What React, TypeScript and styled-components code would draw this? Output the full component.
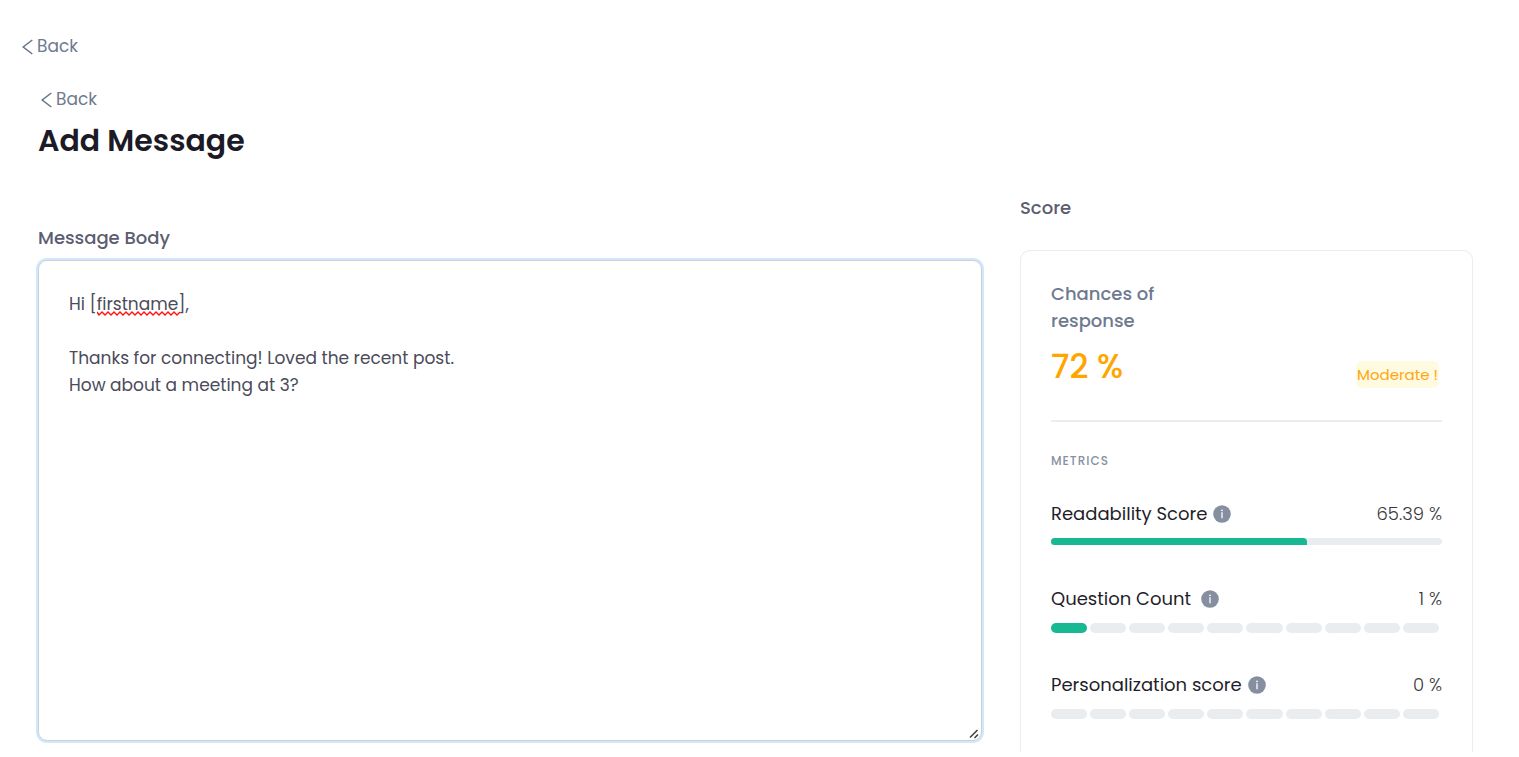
import React, { useState } from 'react';
import styled, { createGlobalStyle } from 'styled-components';

const GlobalStyle = createGlobalStyle`
  *, *::before, *::after { box-sizing: border-box; }
  body {
    margin: 0;
    background: #fff;
    color: #4b4b5a;
    font-family: Poppins, Inter, "Liberation Sans", sans-serif;
    font-size: 18px;
    line-height: 27px;
  }
`;

const Page = styled.div`
  padding: 33px 46px 0 22px;
`;

const BackLink = styled.a`
  display: flex;
  align-items: center;
  gap: 4px;
  width: fit-content;
  color: #6e7a8f;
  font-size: 17px;
  text-decoration: none;
`;

const Content = styled.main`
  padding: 26px 0 0 16px;
`;

const NestedBack = styled(BackLink)`
  margin-left: 3px;
`;

const Title = styled.h1`
  margin: 8px 0 0;
  color: #1b1a26;
  font-size: 30px;
  font-weight: 600;
  line-height: 40px;
`;

const Columns = styled.div`
  display: grid;
  grid-template-columns: minmax(0, 944fr) minmax(0, 453fr);
  column-gap: 38px;
  margin-top: 33px;
`;

const Editor = styled.section`
  padding-top: 30px;
`;

const FieldLabel = styled.label`
  display: block;
  color: #5c5d70;
  font-weight: 500;
`;

const FieldBox = styled.div`
  position: relative;
  margin-top: 9px;
`;

const MessageField = styled.textarea`
  display: block;
  width: 100%;
  height: 481px;
  padding: 30px;
  border: 1px solid #ced0d6;
  border-radius: 9px;
  outline: none;
  box-shadow: 0 0 0 2px #d0e8fd;
  background: #fff;
  color: #4b4b5a;
  font: inherit;
  font-size: 17px;
  resize: vertical;

  &::-webkit-resizer {
    background: transparent;
  }
`;

const SpellMark = styled.svg`
  position: absolute;
  top: 51px;
  left: 59px;
  pointer-events: none;
`;

const Grip = styled.svg`
  position: absolute;
  right: 3px;
  bottom: 2px;
  pointer-events: none;
`;

const SectionTitle = styled.h2`
  margin: 0;
  color: #5c5d70;
  font-size: 18px;
  font-weight: 500;
  line-height: 27px;
`;

const Card = styled.div`
  margin-top: 29px;
  padding: 29px 30px 33px;
  border: 1px solid #ececf1;
  border-bottom: 0;
  border-radius: 10px 10px 0 0;
`;

const Summary = styled.div`
  display: flex;
  align-items: flex-end;
  justify-content: space-between;
  padding-bottom: 32px;
  border-bottom: 2px solid #ececf1;
`;

const ChanceLabel = styled.div`
  width: 130px;
  color: #6e7a8f;
  font-weight: 500;
`;

const ChanceValue = styled.div`
  margin-top: 12px;
  color: #ffa500;
  font-size: 33px;
  font-weight: 500;
  line-height: 42px;
`;

const Badge = styled.span`
  margin-right: 3px;
  padding: 0 1px;
  border-radius: 6px;
  background: #fffbe0;
  color: #ffa510;
  font-size: 15px;
  font-weight: 400;
`;

const MetricsTitle = styled.h3`
  margin: 29px 0 0;
  color: #8791a3;
  font-size: 12px;
  font-weight: 500;
  line-height: 20px;
  letter-spacing: 1px;
`;

const Metric = styled.div<{ $gap: number }>`
  display: grid;
  row-gap: 11px;
  margin-top: ${(p) => p.$gap}px;
`;

const MetricHead = styled.div`
  display: flex;
  align-items: center;
  justify-content: space-between;
  height: 27px;
`;

const MetricName = styled.span<{ $wide?: boolean }>`
  display: flex;
  align-items: center;
  gap: ${(p) => (p.$wide ? 10 : 6)}px;
  color: #1f1e2a;
`;

const MetricValue = styled.span`
  color: #38383c;
  font-weight: 300;
`;

const Track = styled.div`
  height: 7px;
  overflow: hidden;
  border-radius: 4px;
  background: #e9edf0;
`;

const Fill = styled.div`
  height: 100%;
  border-radius: 0 4px 0 0;
  background: #18b893;
`;

const Segments = styled.div`
  display: flex;
  gap: 3px;
  padding-right: 3px;
`;

const Segment = styled.span<{ $on: boolean }>`
  flex: 1;
  height: 10px;
  border-radius: 5px;
  background: ${(p) => (p.$on ? '#18b893' : '#e9edf0')};
`;

const Chevron = () => (
  <svg width="11" height="16" viewBox="0 0 11 16" fill="none" aria-hidden="true">
    <path d="M10.3 1 1.2 8 10.3 15" stroke="#66728a" strokeWidth="1.5" />
  </svg>
);

const InfoIcon = () => (
  <svg width="18" height="18" viewBox="0 0 18 18" aria-hidden="true">
    <circle cx="9" cy="9" r="8.8" fill="#858fa0" />
    <circle cx="9" cy="5.3" r="0.9" fill="#fff" />
    <path d="M9 7.3V13.2" stroke="#fff" strokeWidth="1.3" />
  </svg>
);

const Squiggle = () => (
  <SpellMark width="85" height="5" viewBox="0 0 85 5" fill="none" aria-hidden="true">
    <path
      d={'M0 1' + Array.from({ length: 28 }, (_, i) => ` L${i * 3 + 2} ${i % 2 ? 1 : 4}`).join('')}
      stroke="#f11"
      strokeWidth="1.4"
    />
  </SpellMark>
);

const ResizeGrip = () => (
  <Grip width="10" height="10" viewBox="0 0 10 10" fill="none" aria-hidden="true">
    <path d="M1 8.5 8.5 1M5.5 9 9 5.5" stroke="#444" strokeWidth="1.6" />
  </Grip>
);

const SegmentBar = ({ filled }: { filled: number }) => (
  <Segments>
    {Array.from({ length: 10 }, (_, i) => (
      <Segment key={i} $on={i < filled} />
    ))}
  </Segments>
);

const DRAFT = `Hi [firstname],

Thanks for connecting! Loved the recent post.
How about a meeting at 3?`;

export default function App() {
  const [message, setMessage] = useState(DRAFT);
  const readability = 65.39;

  return (
    <>
      <GlobalStyle />
      <Page>
        <BackLink href="#">
          <Chevron />
          Back
        </BackLink>
        <Content>
          <NestedBack href="#">
            <Chevron />
            Back
          </NestedBack>
          <Title>Add Message</Title>
          <Columns>
            <Editor>
              <FieldLabel htmlFor="message">Message Body</FieldLabel>
              <FieldBox>
                <MessageField
                  id="message"
                  spellCheck={false}
                  value={message}
                  onChange={(e) => setMessage(e.target.value)}
                />
                {message.startsWith('Hi [firstname]') && <Squiggle />}
                <ResizeGrip />
              </FieldBox>
            </Editor>
            <section>
              <SectionTitle>Score</SectionTitle>
              <Card>
                <Summary>
                  <div>
                    <ChanceLabel>Chances of response</ChanceLabel>
                    <ChanceValue>72 %</ChanceValue>
                  </div>
                  <Badge>Moderate !</Badge>
                </Summary>
                <MetricsTitle>METRICS</MetricsTitle>
                <Metric $gap={29}>
                  <MetricHead>
                    <MetricName>
                      Readability Score
                      <InfoIcon />
                    </MetricName>
                    <MetricValue>{readability} %</MetricValue>
                  </MetricHead>
                  <Track>
                    <Fill style={{ width: `${readability}%` }} />
                  </Track>
                </Metric>
                <Metric $gap={40}>
                  <MetricHead>
                    <MetricName $wide>
                      Question Count
                      <InfoIcon />
                    </MetricName>
                    <MetricValue>1 %</MetricValue>
                  </MetricHead>
                  <SegmentBar filled={1} />
                </Metric>
                <Metric $gap={38}>
                  <MetricHead>
                    <MetricName>
                      Personalization score
                      <InfoIcon />
                    </MetricName>
                    <MetricValue>0 %</MetricValue>
                  </MetricHead>
                  <SegmentBar filled={0} />
                </Metric>
              </Card>
            </section>
          </Columns>
        </Content>
      </Page>
    </>
  );
}
